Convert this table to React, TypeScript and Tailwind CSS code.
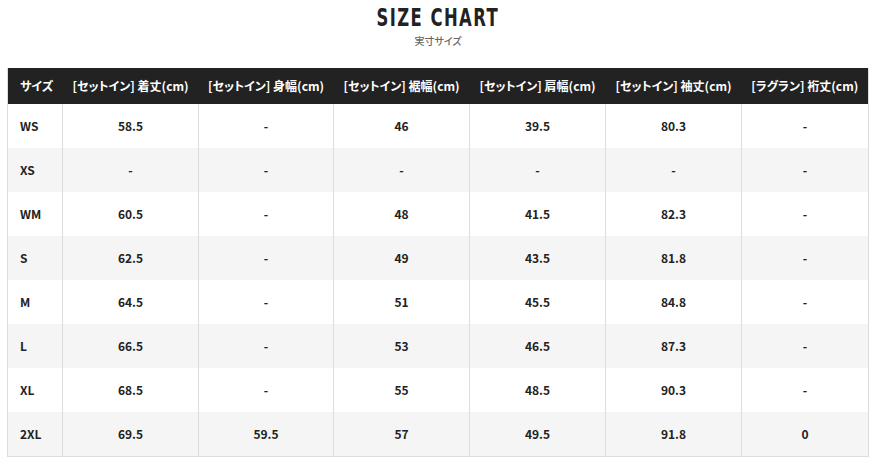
const headers = [
  'サイズ',
  '[セットイン] 着丈(cm)',
  '[セットイン] 身幅(cm)',
  '[セットイン] 裾幅(cm)',
  '[セットイン] 肩幅(cm)',
  '[セットイン] 袖丈(cm)',
  '[ラグラン] 裄丈(cm)',
]

const rows = [
  ['WS', '58.5', '-', '46', '39.5', '80.3', '-'],
  ['XS', '-', '-', '-', '-', '-', '-'],
  ['WM', '60.5', '-', '48', '41.5', '82.3', '-'],
  ['S', '62.5', '-', '49', '43.5', '81.8', '-'],
  ['M', '64.5', '-', '51', '45.5', '84.8', '-'],
  ['L', '66.5', '-', '53', '46.5', '87.3', '-'],
  ['XL', '68.5', '-', '55', '48.5', '90.3', '-'],
  ['2XL', '69.5', '59.5', '57', '49.5', '91.8', '0'],
]

const App = () => {
  return (
    <div className="w-[876px] h-[461px] bg-white overflow-hidden font-['Noto_Sans_CJK_JP',sans-serif] text-[#222] [font-feature-settings:'palt']">
      <div className="flex flex-col items-center pt-[4px]">
        <h1 className="inline-block scale-x-[0.76] font-['DejaVu_Sans_Condensed',sans-serif] font-bold text-[24px] leading-[28px] tracking-[0.08em] text-[#222]">
          SIZE CHART
        </h1>
        <div className="text-[10px] leading-[14px] mt-[2px] text-[#666] font-medium">実寸サイズ</div>
      </div>
      <div className="mt-[20px] ml-[7px] w-[861px]">
        <table className="w-full table-fixed border-collapse border-x border-b border-[#ddd] text-[12px] font-bold">
          <colgroup>
            <col className="w-[55px]" />
            <col className="w-[136px]" />
            <col className="w-[135px]" />
            <col className="w-[136px]" />
            <col className="w-[136px]" />
            <col className="w-[136px]" />
            <col className="w-[127px]" />
          </colgroup>
          <thead>
            <tr className="bg-[#222] text-white h-[36px]">
              {headers.map((h, i) => (
                <th key={h} className={i === 0 ? 'text-left pl-[12px] font-bold' : 'text-center font-bold'}>
                  {h}
                </th>
              ))}
            </tr>
          </thead>
          <tbody>
            {rows.map((r, ri) => (
              <tr key={r[0]} className={ri % 2 === 1 ? 'bg-[#f5f5f5] h-[44px]' : 'bg-white h-[44px]'}>
                {r.map((c, ci) => (
                  <td
                    key={ci}
                    className={
                      ci === 0
                        ? 'text-left pl-[12px] border-r border-[#ddd]'
                        : 'text-center border-r border-[#ddd]'
                    }
                  >
                    {c}
                  </td>
                ))}
              </tr>
            ))}
          </tbody>
        </table>
      </div>
    </div>
  )
}

export default App
